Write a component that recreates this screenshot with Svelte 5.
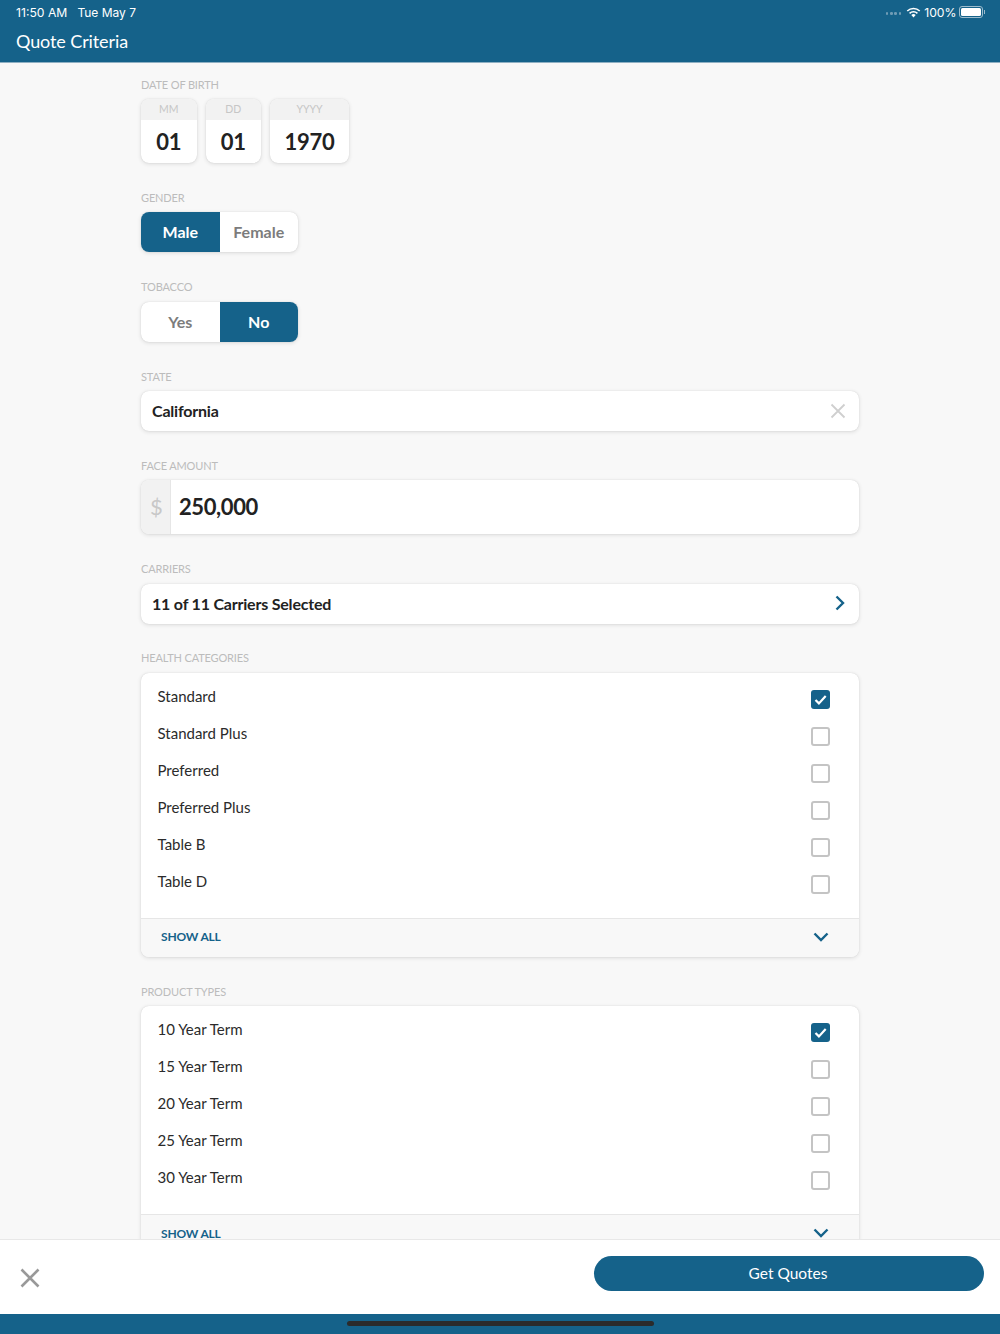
<script>
  const health = ['Standard', 'Standard Plus', 'Preferred', 'Preferred Plus', 'Table B', 'Table D'];
  const products = ['10 Year Term', '15 Year Term', '20 Year Term', '25 Year Term', '30 Year Term'];
  const dob = [
    { label: 'MM', value: '01', cls: 'short' },
    { label: 'DD', value: '01', cls: 'short' },
    { label: 'YYYY', value: '1970', cls: 'long' }
  ];
</script>

{#snippet checklist(items)}
  <div class="card list">
    <div class="rows">
      {#each items as item, i}
        <div class="row">
          <span>{item}</span>
          {#if i === 0}
            <span class="check on">
              <svg viewBox="0 0 19 19" width="19" height="19"><path d="M4.500 10l3.400 3.400L14.700 6" fill="none" stroke="#fff" stroke-width="2.200" /></svg>
            </span>
          {:else}
            <span class="check"></span>
          {/if}
        </div>
      {/each}
    </div>
    <div class="show-all">
      <span>SHOW ALL</span>
      <svg viewBox="0 0 16 10" width="16" height="10"><path d="M1.500 1.500L8 8l6.500-6.500" fill="none" stroke="#15628a" stroke-width="2.400" /></svg>
    </div>
  </div>
{/snippet}

<div class="page">
  <header>
    <div class="status">
      <span class="time">11:50 AM</span>
      <span class="date">Tue May 7</span>
      <span class="status-right">
        <span class="dots"><i></i><i></i><i></i><i></i></span>
        <svg class="wifi" viewBox="0 0 16 12" width="15" height="11">
          <path d="M8 11.500L5.600 8.800a3.400 3.400 0 0 1 4.800 0z" fill="#fff" />
          <path d="M3.700 6.900a6.200 6.200 0 0 1 8.600 0M1.200 4.300a9.800 9.800 0 0 1 13.600 0" fill="none" stroke="#fff" stroke-width="1.700" />
        </svg>
        <span>100%</span>
        <span class="battery"><b></b></span>
        <span class="nub"></span>
      </span>
    </div>
    <h1>Quote Criteria</h1>
  </header>

  <main>
    <section>
      <div class="label">DATE OF BIRTH</div>
      <div class="dob">
        {#each dob as d}
          <div class="dob-box {d.cls}">
            <div class="dob-head">{d.label}</div>
            <div class="dob-val">{d.value}</div>
          </div>
        {/each}
      </div>
    </section>

    <section>
      <div class="label">GENDER</div>
      <div class="toggle">
        <span class="on">Male</span>
        <span>Female</span>
      </div>
    </section>

    <section>
      <div class="label">TOBACCO</div>
      <div class="toggle">
        <span>Yes</span>
        <span class="on">No</span>
      </div>
    </section>

    <section>
      <div class="label">STATE</div>
      <div class="card field">
        <span>California</span>
        <svg viewBox="0 0 16 16" width="16" height="16"><path d="M1.500 1.500l13 13M14.500 1.500l-13 13" stroke="#cfcfcf" stroke-width="1.800" /></svg>
      </div>
    </section>

    <section>
      <div class="label">FACE AMOUNT</div>
      <div class="card amount">
        <span class="dollar">$</span>
        <span class="amount-val">250,000</span>
      </div>
    </section>

    <section>
      <div class="label">CARRIERS</div>
      <div class="card field">
        <span>11 of 11 Carriers Selected</span>
        <svg class="chev" viewBox="0 0 10 16" width="10" height="16"><path d="M1.500 1.500L8 8l-6.500 6.500" fill="none" stroke="#15628a" stroke-width="2.400" /></svg>
      </div>
    </section>

    <section>
      <div class="label">HEALTH CATEGORIES</div>
      {@render checklist(health)}
    </section>

    <section>
      <div class="label">PRODUCT TYPES</div>
      {@render checklist(products)}
    </section>
  </main>

  <footer>
    <svg viewBox="0 0 20 20" width="20" height="20"><path d="M1.500 1.500l17 17M18.500 1.500l-17 17" stroke="#999" stroke-width="2.600" /></svg>
    <button>Get Quotes</button>
  </footer>

  <div class="home"><span></span></div>
</div>

<style>
  :global(body) {
    margin: 0;
    font-family: Lato, sans-serif;
    background: #f8f8f8;
  }

  .page {
    height: 1334px;
    display: flex;
    flex-direction: column;
    overflow: hidden;
  }

  header {
    height: 62px;
    flex: none;
    background: #15628a;
    color: #fff;
    border-bottom: 1px solid #8fb0c3;
    box-sizing: content-box;
  }

  .status {
    height: 24px;
    display: flex;
    align-items: center;
    padding: 0 15px 0 16px;
    font-family: Inter, sans-serif;
    font-size: 12.200px;
  }

  .date {
    margin-left: 10px;
    font-size: 12px;
  }

  .status-right {
    margin-left: auto;
    display: flex;
    align-items: center;
  }

  .dots {
    display: flex;
    gap: 1.800px;
    margin-right: 5px;
    margin-top: 3px;
  }

  .dots i {
    width: 2.500px;
    height: 2.500px;
    border-radius: 50%;
    background: #6f9cb5;
  }

  .wifi {
    margin-right: 3px;
  }

  .battery {
    width: 24px;
    height: 12px;
    margin-left: 2px;
    padding: 1px;
    box-sizing: border-box;
    border: 1px solid #9dbccd;
    border-radius: 3px;
    display: flex;
  }

  .battery b {
    flex: 1;
    background: #fff;
    border-radius: 1.500px;
  }

  .nub {
    width: 1.500px;
    height: 4px;
    margin-left: 1px;
    background: #9dbccd;
  }

  h1 {
    margin: 0 0 0 16px;
    font-size: 18px;
    letter-spacing: -0.1px;
    font-weight: 400;
    line-height: 34px;
  }

  main {
    flex: 1;
    min-height: 0;
    overflow: hidden;
    padding: 14.700px 141px 0;
    display: flex;
    flex-direction: column;
    gap: 27.800px;
  }

  section {
    flex: none;
  }

  .label {
    height: 14px;
    line-height: 14px;
    margin-bottom: 7.500px;
    font-size: 11px;
    letter-spacing: -0.15px;
    color: #bcbcbc;
  }

  .card {
    background: #fff;
    border-radius: 8px;
    box-sizing: border-box;
    box-shadow: 0 0 1px rgba(0, 0, 0, 0.16), 0 1px 4px rgba(0, 0, 0, 0.12);
  }

  .dob {
    display: flex;
    gap: 9px;
  }

  .dob-box {
    height: 64px;
    border-radius: 8px;
    overflow: hidden;
    background: #fff;
    box-shadow: 0 0 1px rgba(0, 0, 0, 0.16), 0 1px 4px rgba(0, 0, 0, 0.12);
  }

  .dob-box.short {
    width: 55.500px;
  }

  .dob-box.long {
    width: 79px;
  }

  .dob-head {
    height: 21px;
    line-height: 20px;
    text-align: center;
    font-size: 10.500px;
    color: #c6c6c6;
    background: #f2f2f2;
  }

  .dob-val {
    height: 43px;
    line-height: 43px;
    text-align: center;
    font-size: 22px;
    letter-spacing: -0.2px;
    font-weight: 700;
    color: #222;
  }

  .toggle {
    display: flex;
    width: 157px;
    height: 40px;
    border-radius: 8px;
    overflow: hidden;
    background: #fff;
    box-shadow: 0 0 1px rgba(0, 0, 0, 0.16), 0 1px 4px rgba(0, 0, 0, 0.12);
  }

  .toggle span {
    flex: 1;
    line-height: 40px;
    text-align: center;
    font-size: 16px;
    font-weight: 700;
    color: #7c7c7c;
  }

  .toggle .on {
    background: #15628a;
    color: #fff;
  }

  .field {
    height: 40px;
    padding: 0 12px 1px 11px;
    display: flex;
    align-items: center;
    justify-content: space-between;
    font-size: 16px;
    letter-spacing: -0.2px;
    font-weight: 700;
    color: #222;
  }

  .field svg {
    margin-right: 1px;
  }

  .field .chev {
    margin-right: 2px;
  }

  .amount {
    height: 54px;
    display: flex;
    overflow: hidden;
  }

  .dollar {
    width: 27px;
    padding-left: 2px;
    line-height: 54px;
    text-align: center;
    font-size: 22px;
    color: #c8c8c8;
    background: #f2f2f2;
    border-right: 1px solid #e6e6e6;
  }

  .amount-val {
    margin-left: 8px;
    line-height: 54px;
    font-size: 22px;
    letter-spacing: -0.4px;
    font-weight: 700;
    color: #222;
  }

  .list {
    overflow: hidden;
  }

  .rows {
    padding: 5px 0 18px;
  }

  .row {
    height: 37px;
    padding: 0 29px 0 16.500px;
    display: flex;
    justify-content: space-between;
    font-size: 15px;
    color: #2b2b2b;
    line-height: 37px;
  }

  .check {
    width: 19px;
    height: 19px;
    margin-top: 12px;
    box-sizing: border-box;
    border: 2px solid #c4c4c4;
    border-radius: 3px;
  }

  .check.on {
    border: none;
    background: #15628a;
  }

  .check svg {
    display: block;
  }

  .show-all {
    height: 39px;
    padding: 0 30px 2px 20px;
    box-sizing: border-box;
    display: flex;
    align-items: center;
    justify-content: space-between;
    background: #f8f8f8;
    border-top: 1px solid #e6e6e6;
    font-size: 12px;
    letter-spacing: -0.2px;
    font-weight: 700;
    color: #15628a;
  }

  footer {
    height: 75px;
    flex: none;
    box-sizing: border-box;
    padding: 0 16px 0 20px;
    display: flex;
    align-items: center;
    justify-content: space-between;
    background: #fff;
    border-top: 1px solid #e8e8e8;
    position: relative;
  }

  footer svg {
    margin-top: 1px;
  }

  footer button {
    width: 390px;
    height: 35px;
    margin-top: -7px;
    padding: 0 2px 2px 0;
    border: none;
    border-radius: 18px;
    background: #15628a;
    color: #fff;
    font-family: inherit;
    font-size: 15.500px;
  }

  .home {
    height: 20px;
    flex: none;
    background: #15628a;
    display: flex;
    justify-content: center;
    align-items: center;
  }

  .home span {
    width: 307px;
    height: 5px;
    margin-top: -1px;
    border-radius: 3px;
    background: #2b2b2b;
  }
</style>
